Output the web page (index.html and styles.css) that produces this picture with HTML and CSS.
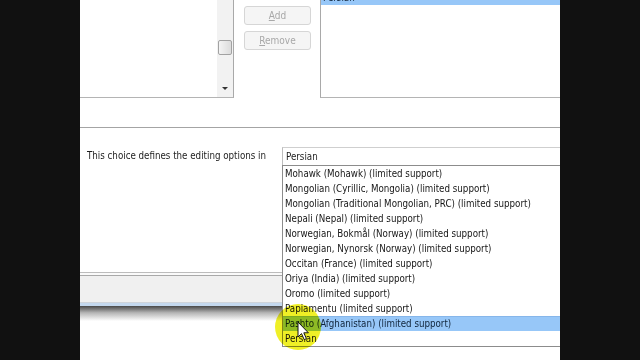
FILE: index.html
```html
<!DOCTYPE html>
<html>
<head>
<meta charset="utf-8">
<link rel="stylesheet" href="styles.css">
</head>
<body>
<div class="screen">
  <div class="bar"></div>
  <div class="stage">
    <div class="top">
      <div class="lb-left">
        <div class="lb-fill"></div>
        <div class="vscroll">
          <div class="thumb"></div>
          <div class="arrow-down"></div>
        </div>
      </div>
      <div class="btns">
        <div class="btn"><span class="u">A</span>dd</div>
        <div class="btn"><span class="u">R</span>emove</div>
      </div>
      <div class="lb-right">
        <div class="item sel">Persian</div>
      </div>
    </div>
    <div class="sep"></div>
    <div class="choice-row">
      <div class="label">This choice defines the editing options in</div>
      <div class="combo">Persian</div>
    </div>
    <div class="frame-bottom">
      <div class="fb-l1"></div>
      <div class="fb-w"></div>
      <div class="fb-l2"></div>
      <div class="fb-band"></div>
      <div class="fb-l3"></div>
      <div class="fb-blue"></div>
      <div class="fb-shadow"></div>
    </div>

    <div class="dropdown">
      <div class="item">Mohawk (Mohawk) (limited support)</div>
      <div class="item">Mongolian (Cyrillic, Mongolia) (limited support)</div>
      <div class="item">Mongolian (Traditional Mongolian, PRC) (limited support)</div>
      <div class="item">Nepali (Nepal) (limited support)</div>
      <div class="item">Norwegian, Bokmål (Norway) (limited support)</div>
      <div class="item">Norwegian, Nynorsk (Norway) (limited support)</div>
      <div class="item">Occitan (France) (limited support)</div>
      <div class="item">Oriya (India) (limited support)</div>
      <div class="item">Oromo (limited support)</div>
      <div class="item">Papiamentu (limited support)</div>
      <div class="item sel">Pashto (Afghanistan) (limited support)</div>
      <div class="item">Persian</div>
    </div>

    <div class="spot"></div>
    <svg class="cursor" width="14" height="22" viewBox="0 0 14 22">
      <path d="M1 1 L1 16 L4.5 12.6 L7.2 18.6 L9.4 17.6 L6.8 11.8 L11.4 11.8 Z" fill="#ffffff" stroke="#111111" stroke-width="1" stroke-linejoin="round"/>
    </svg>
  </div>
  <div class="bar"></div>
</div>
</body>
</html>
```

FILE: styles.css
```css
html, body {
  margin: 0;
  padding: 0;
  background: #111111;
}

.screen {
  display: flex;
  width: 640px;
  height: 360px;
  overflow: hidden;
}

.bar {
  width: 80px;
  flex: none;
  background: #111111;
}

.stage {
  position: relative;
  width: 480px;
  height: 360px;
  flex: none;
  background: #ffffff;
  overflow: hidden;
  font-family: "DejaVu Sans Condensed", "DejaVu Sans", sans-serif;
  font-size: 9.7px;
  color: #1c1c1c;
}

/* ---------- top row ---------- */
.top {
  display: flex;
  height: 98px;
}

.lb-left {
  width: 153px;
  flex: none;
  display: flex;
  border-right: 1px solid #a9a9a9;
  border-bottom: 1px solid #b4b4b4;
  background: #ffffff;
}

.lb-fill {
  flex: 1;
}

.vscroll {
  width: 16px;
  background: #f2f2f2;
  display: flex;
  flex-direction: column;
  align-items: center;
}

.thumb {
  margin-top: 40px;
  width: 12px;
  height: 13px;
  border: 1px solid #a2a2a2;
  border-radius: 2px;
  background: linear-gradient(to right, #f4f4f4, #dcdcdc);
}

.arrow-down {
  margin-top: 32px;
  width: 0;
  height: 0;
  border-left: 3px solid transparent;
  border-right: 3px solid transparent;
  border-top: 3px solid #333333;
}

.btns {
  margin-left: 10px;
  margin-top: 6px;
  display: flex;
  flex-direction: column;
  gap: 6px;
  width: 67px;
  flex: none;
}

.btn {
  height: 17px;
  border: 1px solid #d6d6d6;
  border-radius: 3px;
  background: #f5f5f5;
  color: #a8a8a8;
  font-family: "DejaVu Sans Condensed", "DejaVu Sans", sans-serif;
  font-size: 10px;
  line-height: 17px;
  text-align: center;
}

.u {
  text-decoration: underline;
}

.lb-right {
  margin-left: 9px;
  flex: 1;
  border-left: 1px solid #a9a9a9;
  border-bottom: 1px solid #b4b4b4;
  background: #ffffff;
  overflow: hidden;
}

.lb-right .item {
  margin-top: -10px;
}

/* ---------- items ---------- */
.item {
  height: 15px;
  line-height: 15px;
  padding-left: 2px;
  white-space: nowrap;
}

.item.sel {
  background: #97c7f8;
  box-shadow: inset 0 1px 0 #86b6ea;
  color: #10243a;
}

/* ---------- separator & choice row ---------- */
.sep {
  margin-top: 29px;
  height: 1px;
  background: #a4a4a4;
}

.choice-row {
  display: flex;
  padding-top: 19px;
}

.label {
  width: 195px;
  padding-left: 7px;
  flex: none;
  line-height: 17px;
}

.combo {
  flex: 1;
  height: 18px;
  line-height: 17px;
  border-top: 1px solid #cfcfcf;
  border-left: 1px solid #bdbdbd;
  padding-left: 3px;
}

/* ---------- window bottom edge ---------- */
.frame-bottom {
  margin-top: 106px;
  display: flex;
  flex-direction: column;
}

.fb-l1 { height: 1px; background: #bcbcbc; }
.fb-w { height: 2px; background: #fafafa; }
.fb-l2 { height: 1px; background: #a9a9a9; }
.fb-band { height: 26px; background: #f0f0f0; }
.fb-l3 { height: 1px; background: #cfd4da; }
.fb-blue { height: 3px; background: #c4d8ee; }
.fb-shadow {
  height: 15px;
  background: linear-gradient(to bottom, rgba(40,40,40,0.85), rgba(90,90,90,0.45) 45%, rgba(255,255,255,0));
}

/* ---------- dropdown popup ---------- */
.dropdown {
  position: absolute;
  left: 202px;
  top: 165px;
  width: 300px;
  height: 180px;
  border: 1px solid #8c8c8c;
  background: #ffffff;
  color: #161616;
}

/* ---------- cursor highlight ---------- */
.spot {
  position: absolute;
  left: 195px;
  top: 304px;
  width: 46px;
  height: 46px;
  border-radius: 50%;
  background: radial-gradient(circle, rgb(238,238,34) 0%, rgb(240,240,40) 80%, rgba(245,245,80,0) 100%);
  mix-blend-mode: multiply;
}

.cursor {
  position: absolute;
  left: 217px;
  top: 321px;
}
```
